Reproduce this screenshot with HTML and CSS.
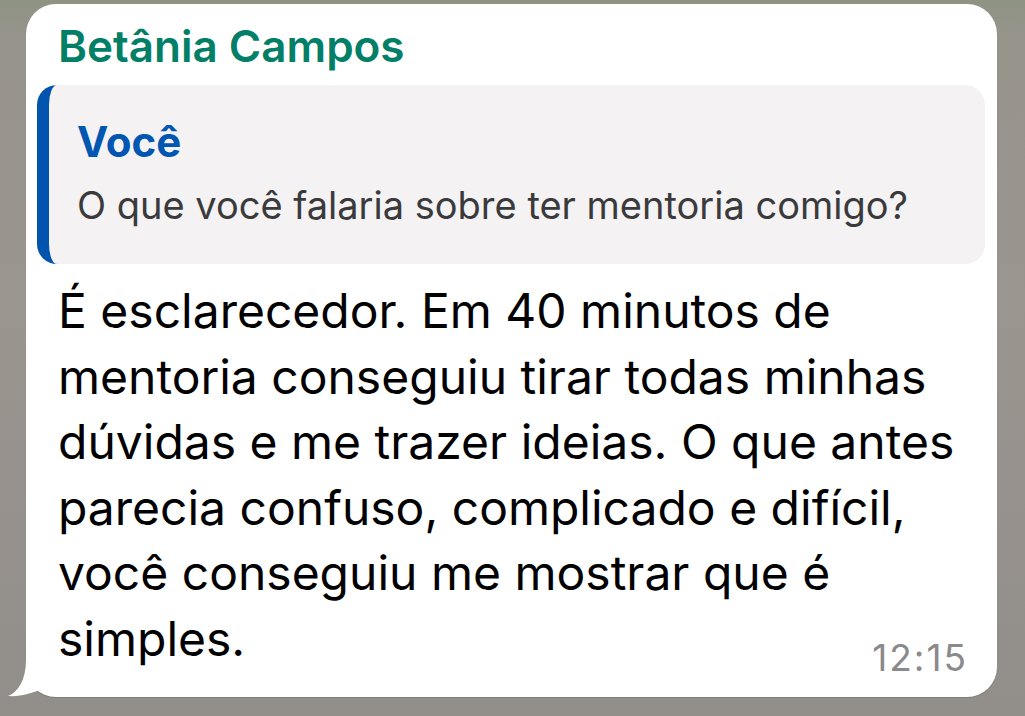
FILE: index.html
```html
<!DOCTYPE html>
<html lang="pt-BR">
<head>
<meta charset="utf-8">
<title>Mensagem</title>
<link rel="stylesheet" href="styles.css">
</head>
<body>
  <div class="chat">
    <div class="bubble">
      <svg class="tail" width="60" height="50" viewBox="0 0 60 50" aria-hidden="true">
        <path d="M20 0 L20 13 C20 33 12 45 2 49 C14 50 26 46 34 43 C42 48 50 50 60 50 L60 0 Z" fill="#ffffff"/>
      </svg>
      <div class="sender">Betânia Campos</div>
      <div class="quote">
        <div class="quote-name">Você</div>
        <div class="quote-text">O que você falaria sobre ter mentoria comigo?</div>
      </div>
      <div class="message">É esclarecedor. Em 40 minutos de mentoria conseguiu tirar todas minhas dúvidas e me trazer ideias. O que antes parecia confuso, complicado e difícil, você conseguiu me mostrar que é simples.</div>
      <div class="time">12:15</div>
    </div>
  </div>
</body>
</html>
```

FILE: styles.css
```css
html, body {
  margin: 0;
  padding: 0;
}

body {
  width: 1025px;
  height: 716px;
  overflow: hidden;
  background: linear-gradient(180deg, #8e9383 0px, #97948c 40px, #9a958f 300px, #928e8a 716px);
  font-family: Inter, "Noto Sans", "Liberation Sans", sans-serif;
}

.chat {
  padding: 4px 28px 0 26px;
}

.bubble {
  position: relative;
  box-sizing: border-box;
  height: 693px;
  background: #ffffff;
  border-radius: 30px;
  padding: 16px 12px 0 11px;
  display: flex;
  flex-direction: column;
  box-shadow: 0 1px 1px rgba(0, 0, 0, 0.12);
}

.tail {
  position: absolute;
  left: -20px;
  bottom: 0;
  display: block;
}

.sender {
  position: relative;
  padding-left: 21px;
  font-size: 44px;
  line-height: 52px;
  font-weight: 600;
  color: #037f67;
}

.quote {
  margin-top: 13px;
  background: #f4f2f3;
  border-left: 12px solid #0054ae;
  border-radius: 20px;
  padding: 31px 20px 37px 28px;
}

.quote-name {
  font-size: 42px;
  line-height: 52px;
  font-weight: 700;
  color: #0056b1;
}

.quote-text {
  margin-top: 15px;
  font-size: 38px;
  line-height: 44px;
  color: #3a3a3c;
}

.message {
  position: relative;
  margin-top: 14px;
  padding: 0 20px 0 21px;
  font-size: 48px;
  line-height: 65.5px;
  color: #000000;
}

.time {
  align-self: flex-end;
  margin-top: -33px;
  margin-right: 17px;
  font-size: 37px;
  line-height: 40px;
  letter-spacing: 2px;
  color: #8a8a8d;
}
```
